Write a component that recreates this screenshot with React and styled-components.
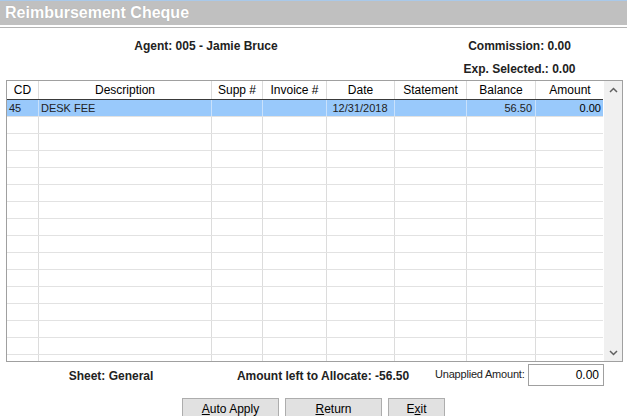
import React from "react";
import styled, { createGlobalStyle } from "styled-components";

const Global = createGlobalStyle`
  html, body { margin: 0; padding: 0; background: #ffffff; }
  body { font-family: "Liberation Sans", Arial, sans-serif; }
  * { box-sizing: border-box; }
`;

const COLS = "32px 173px 51px 64px 68px 72px 69px 68px";

const Page = styled.div`
  width: 627px;
  height: 416px;
  overflow: hidden;
  display: flex;
  flex-direction: column;
  background: #fff;
  & > * { flex-shrink: 0; }
`;

const TitleBar = styled.div`
  height: 25px;
  border-top: 1px solid #a9c9ea;
  background: #c0c0c0;
  display: flex;
  align-items: center;
  padding-left: 5px;
  color: #ffffff;
  font-size: 16px;
  font-weight: bold;
  text-shadow: 0 0 1px rgba(120, 120, 120, 0.4);
`;

const Rule = styled.div`
  height: 1px;
  margin-top: 2px;
  background: #b4b4b4;
`;

const InfoGrid = styled.div`
  display: grid;
  grid-template-columns: 412px 215px;
  grid-auto-rows: 23px;
  padding-top: 6px;
  font-size: 12px;
  font-weight: bold;
  color: #222;
`;

const InfoCell = styled.div`
  display: flex;
  align-items: center;
  justify-content: center;
`;

const GridFrame = styled.div`
  margin-left: 6px;
  width: 617px;
  height: 282px;
  border: 1px solid #a0a0a0;
  display: flex;
`;

const TableArea = styled.div`
  width: 597px;
  display: flex;
  flex-direction: column;
  overflow: hidden;
`;

const HeaderRow = styled.div`
  display: grid;
  grid-template-columns: ${COLS};
  height: 19px;
  border-bottom: 1px solid #3a3a3a;
  flex: none;
`;

const HeaderCell = styled.div`
  border-right: 1px solid #dcdcdc;
  display: flex;
  align-items: center;
  justify-content: center;
  font-size: 12px;
  color: #000;
  white-space: nowrap;
  &:last-child { border-right: none; }
`;

const Body = styled.div`
  flex: 1;
  overflow: hidden;
`;

const Row = styled.div`
  display: grid;
  grid-template-columns: ${COLS};
  height: 17px;
  border-bottom: 1px solid #e2e2e2;
  background: ${(p) => (p.$selected ? "#99c9fb" : "#ffffff")};
`;

const Cell = styled.div`
  border-right: 1px solid ${(p) => (p.$selected ? "#c9e1fb" : "#dcdcdc")};
  display: flex;
  align-items: center;
  justify-content: ${(p) =>
    p.$align === "right" ? "flex-end" : p.$align === "center" ? "center" : "flex-start"};
  padding: 0 3px 0 2px;
  font-size: 11px;
  color: ${(p) => (p.$strong ? "#000" : "#222")};
  white-space: nowrap;
  overflow: hidden;
  &:last-child { border-right: none; }
`;

const ScrollBar = styled.div`
  width: 18px;
  margin-left: 1px;
  background: #f0f0f0;
  display: flex;
  flex-direction: column;
  justify-content: space-between;
  align-items: center;
`;

const ArrowBox = styled.div`
  width: 17px;
  height: 17px;
  display: flex;
  align-items: center;
  justify-content: center;
`;

const BottomRow = styled.div`
  display: grid;
  grid-template-columns: 222px 202px 104px 76px;
  margin-top: 2px;
  height: 22px;
  align-items: center;
`;

const BoldLabel = styled.div`
  text-align: center;
  font-size: 12px;
  font-weight: bold;
  color: #222;
  padding-top: 2px;
`;

const SmallLabel = styled.div`
  padding-left: 11px;
  font-size: 11px;
  letter-spacing: -0.2px;
  color: #222;
  margin-top: -3px;
  white-space: nowrap;
`;

const AmountBox = styled.div`
  width: 76px;
  height: 22px;
  border: 1px solid #a0a0a0;
  display: flex;
  align-items: center;
  justify-content: flex-end;
  padding-right: 4px;
  font-size: 12px;
  color: #000;
`;

const ButtonRow = styled.div`
  display: flex;
  justify-content: center;
  gap: 6px;
  margin-top: 12px;
`;

const Button = styled.button`
  width: ${(p) => p.$w}px;
  height: 22px;
  background: #e1e1e1;
  border: 1px solid #adadad;
  font-family: "Liberation Sans", Arial, sans-serif;
  font-size: 12px;
  color: #000;
  padding: 0;
  display: flex;
  align-items: center;
  justify-content: center;
  u { text-decoration: underline; }
`;

const Chevron = ({ up }) => (
  <svg width="9" height="6" viewBox="0 0 9 6">
    <polyline
      points={up ? "1,5 4.5,1.5 8,5" : "1,1 4.5,4.5 8,1"}
      fill="none"
      stroke="#606060"
      strokeWidth="1.5"
    />
  </svg>
);

const headers = ["CD", "Description", "Supp #", "Invoice #", "Date", "Statement", "Balance", "Amount"];

export default function App() {
  const empty = Array.from({ length: 15 });
  return (
    <Page>
      <Global />
      <TitleBar>Reimbursement Cheque</TitleBar>
      <Rule />
      <InfoGrid>
        <InfoCell>Agent: 005 - Jamie Bruce</InfoCell>
        <InfoCell>Commission: 0.00</InfoCell>
        <InfoCell />
        <InfoCell>Exp. Selected.: 0.00</InfoCell>
      </InfoGrid>
      <GridFrame>
        <TableArea>
          <HeaderRow>
            {headers.map((h) => (
              <HeaderCell key={h}>{h}</HeaderCell>
            ))}
          </HeaderRow>
          <Body>
            <Row $selected>
              <Cell $selected>45</Cell>
              <Cell $selected>DESK FEE</Cell>
              <Cell $selected />
              <Cell $selected />
              <Cell $selected $align="center">12/31/2018</Cell>
              <Cell $selected />
              <Cell $selected $align="right">56.50</Cell>
              <Cell $selected $align="right" $strong>0.00</Cell>
            </Row>
            {empty.map((_, i) => (
              <Row key={i}>
                {headers.map((h) => (
                  <Cell key={h} />
                ))}
              </Row>
            ))}
          </Body>
        </TableArea>
        <ScrollBar>
          <ArrowBox>
            <Chevron up />
          </ArrowBox>
          <ArrowBox>
            <Chevron />
          </ArrowBox>
        </ScrollBar>
      </GridFrame>
      <BottomRow>
        <BoldLabel>Sheet: General</BoldLabel>
        <BoldLabel>Amount left to Allocate: -56.50</BoldLabel>
        <SmallLabel>Unapplied Amount:</SmallLabel>
        <AmountBox>0.00</AmountBox>
      </BottomRow>
      <ButtonRow>
        <Button $w={97}>
          <span><u>A</u>uto Apply</span>
        </Button>
        <Button $w={97}>
          <span><u>R</u>eturn</span>
        </Button>
        <Button $w={57}>
          <span>E<u>x</u>it</span>
        </Button>
      </ButtonRow>
    </Page>
  );
}
